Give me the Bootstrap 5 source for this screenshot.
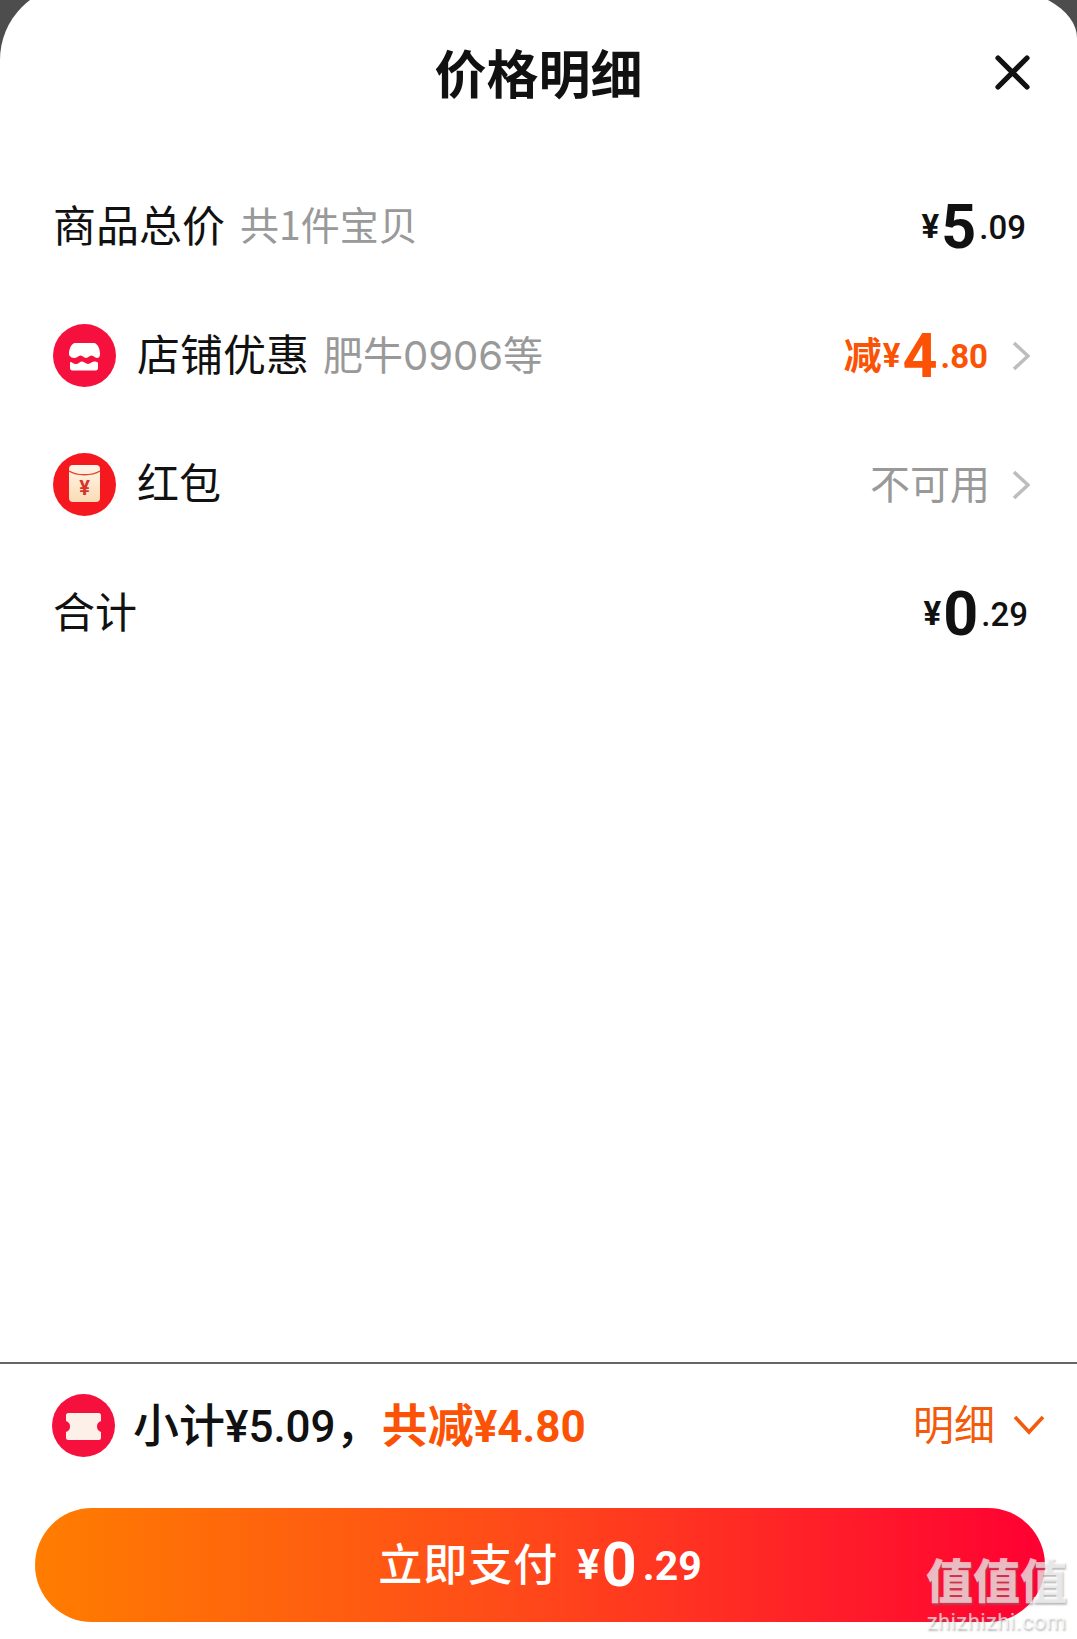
<!DOCTYPE html>
<html lang="zh-CN">
<head>
  <meta charset="UTF-8">
  <meta name="viewport" content="width=device-width, initial-scale=1.0">
  <title>价格明细</title>
  <link href="https://cdn.jsdelivr.net/npm/bootstrap@5.3.0/dist/css/bootstrap.min.css" rel="stylesheet">
  <style>
    html, body {
      height: 1639px;
      overflow: hidden;
    }
    body {
      background-color: #4d4d4d;
      color: #111;
      font-family: Roboto, "Noto Sans CJK SC", sans-serif;
    }
    .sheet {
      position: relative;
      height: 1654px;
      margin-top: -15px;
      background: #fff;
      border-radius: 75px 96px 0 0 / 75px 53px 0 0;
      overflow: hidden;
    }
    .cjk { font-family: "Noto Sans CJK SC", sans-serif; }
    .sheet-head {
      height: 177px;
      padding: 50px 47px 0;
    }
    .sheet-title {
      font-size: 52px;
      line-height: 74px;
      font-weight: 700;
      margin: 0;
    }
    .head-gap { width: 35px; }
    .close-icon { margin-top: 20px; }
    .fee-row {
      height: 129px;
      padding: 0 47px 0 53px;
    }
    .fee-label {
      font-size: 43px;
      line-height: 60px;
      padding-bottom: 8px;
    }
    .fee-label-short { font-size: 42px; }
    .fee-note {
      font-size: 39px;
      line-height: 60px;
      color: #999;
      margin-left: 15px;
      padding-bottom: 8px;
    }
    .fee-note-num { font-size: 40px; margin-left: 14px; padding-bottom: 3px; }
    .note-num { font-family: Inter, sans-serif; }
    .fee-icon {
      width: 63px;
      height: 63px;
      margin-right: 21px;
      flex: none;
    }
    .price {
      display: flex;
      align-items: center;
      line-height: 60px;
      white-space: nowrap;
    }
    .price-end { margin-right: 4px; }
    .price-end-alt { margin-right: 2px; }
    .price-sym { font-size: 33px; font-weight: 700; margin-right: 2px; }
    .price-big { font-size: 61px; font-weight: 700; }
    .price-dec { font-size: 33px; font-weight: 500; margin-left: 3px; padding-top: 2px; }
    .price-cut { color: #fb5205; }
    .price-cut .cut-word { font-size: 38px; font-weight: 700; margin-right: 1px; padding-bottom: 6px; }
    .fee-muted { font-size: 40px; color: #999; line-height: 60px; padding-bottom: 6px; margin-right: -2px; }
    .fee-chevron { width: 18px; height: 30px; margin-left: 24px; }
    .sheet-foot { border-top: 2px solid #666; }
    .total-row {
      height: 122px;
      margin-bottom: 22px;
      padding: 0 32px 0 52px;
    }
    .total-icon { width: 63px; height: 63px; margin-right: 18px; flex: none; }
    .total-text {
      font-size: 44px;
      font-weight: 500;
      line-height: 60px;
      white-space: nowrap;
      padding-bottom: 2px;
    }
    .total-text .cjk { font-size: 46px; }
    .total-cut { color: #fb5205; font-weight: 700; }
    .detail-link {
      color: #f25a0c;
      font-size: 41px;
      line-height: 60px;
      padding-bottom: 6px;
    }
    .detail-chevron { width: 32px; height: 20px; margin-left: 18px; }
    .pay-btn {
      display: flex;
      align-items: center;
      justify-content: center;
      width: 1010px;
      height: 114px;
      margin: 0 0 17px 35px;
      padding: 0;
      border: 0;
      border-radius: 57px;
      color: #fff;
      background: linear-gradient(90deg, #ff7d00 0%, #ff4d18 45%, #ff0033 100%);
    }
    .pay-word { font-size: 44px; font-weight: 500; letter-spacing: 1px; margin-right: 19px; padding-bottom: 6px; }
    .pay-btn .price-sym { font-size: 42px; }
    .pay-btn .price-big { font-size: 61px; }
    .pay-btn .price-dec { font-size: 41px; font-weight: 700; margin-left: 6px; }
    .mark-logo {
      position: absolute;
      right: 10px;
      bottom: 5px;
      text-align: center;
      color: rgba(255, 255, 255, .68);
      text-shadow: 1px 2px 2px rgba(120, 120, 120, .5);
      pointer-events: none;
    }
    .mark-logo-top { font-size: 47px; font-weight: 900; line-height: 48px; }
    .mark-logo-url { font-size: 22px; line-height: 24px; margin-top: 8px; letter-spacing: .4px; }
  </style>
</head>
<body>
  <div class="sheet d-flex flex-column">
    <div class="sheet-head d-flex justify-content-between align-items-start">
      <div class="head-gap"></div>
      <h1 class="sheet-title cjk">价格明细</h1>
      <svg width="35" height="35" viewBox="0 0 35 35" class="close-icon" aria-label="关闭">
        <path d="M3 3L32 32M32 3L3 32" stroke="#111" stroke-width="5.2" stroke-linecap="round"/>
      </svg>
    </div>

    <div class="fee-row d-flex align-items-center justify-content-between">
      <div class="d-flex align-items-center cjk">
        <span class="fee-label">商品总价</span><span class="fee-note">共1件宝贝</span>
      </div>
      <div class="price price-end">
        <span class="price-sym">¥</span><span class="price-big">5</span><span class="price-dec">.09</span>
      </div>
    </div>

    <div class="fee-row d-flex align-items-center justify-content-between">
      <div class="d-flex align-items-center cjk">
        <svg class="fee-icon" viewBox="0 0 63 63">
          <circle cx="31.5" cy="31.5" r="31.5" fill="#f5103d"/>
          <path d="M22 19H41C44 19 47 24 47 30C47 32.5 46 34 44 34C41.5 34 41 31.5 38.5 31.5C36 31.5 35.5 34 33 34C30.5 34 30 31.5 27.5 31.5C25 31.5 24.5 34 22 34C19 34 16 32.5 16 30C16 24 19 19 22 19Z" fill="#fff"/>
          <path d="M17 38C19.5 38 20 40 23 40C26 40 26.5 37.5 29 37.5C31.5 37.5 32.5 40 35 40C37.5 40 38.5 37.5 41 37.5C43 37.5 44 38 45 38.5V44C45 45.5 44 46.5 43 46.5H19C18 46.5 17 45.5 17 44Z" fill="#fff"/>
        </svg>
        <span class="fee-label">店铺优惠</span><span class="fee-note fee-note-num">肥牛<span class="note-num">0906</span>等</span>
      </div>
      <div class="d-flex align-items-center">
        <div class="price price-cut">
          <span class="cut-word cjk">减</span><span class="price-sym">¥</span><span class="price-big">4</span><span class="price-dec fw-bold">.80</span>
        </div>
        <svg class="fee-chevron" viewBox="0 0 18 30"><path d="M2 2L16 15L2 28" fill="none" stroke="#bdbdbd" stroke-width="3.6"/></svg>
      </div>
    </div>

    <div class="fee-row d-flex align-items-center justify-content-between">
      <div class="d-flex align-items-center cjk">
        <svg class="fee-icon" viewBox="0 0 63 63">
          <defs>
            <linearGradient id="envFill" x1="0" y1="0" x2="0" y2="1">
              <stop offset="0" stop-color="#fff6e8"/>
              <stop offset="1" stop-color="#fbdcb4"/>
            </linearGradient>
          </defs>
          <circle cx="31.5" cy="31.5" r="31.5" fill="#f5191f"/>
          <rect x="16" y="12" width="31" height="37" rx="4" fill="url(#envFill)"/>
          <path d="M16 18C24 23 39 23 47 18" fill="none" stroke="#e9402f" stroke-width="1.4"/>
          <text x="31.5" y="42" text-anchor="middle" font-family="Roboto, sans-serif" font-size="20" font-weight="700" fill="#d8342c">¥</text>
        </svg>
        <span class="fee-label fee-label-short">红包</span>
      </div>
      <div class="d-flex align-items-center">
        <span class="fee-muted cjk">不可用</span>
        <svg class="fee-chevron" viewBox="0 0 18 30"><path d="M2 2L16 15L2 28" fill="none" stroke="#bdbdbd" stroke-width="3.6"/></svg>
      </div>
    </div>

    <div class="fee-row d-flex align-items-center justify-content-between">
      <span class="fee-label fee-label-short cjk">合计</span>
      <div class="price price-end-alt">
        <span class="price-sym">¥</span><span class="price-big">0</span><span class="price-dec">.29</span>
      </div>
    </div>

    <div class="flex-grow-1"></div>

    <div class="sheet-foot">
      <div class="total-row d-flex align-items-center justify-content-between">
        <div class="d-flex align-items-center">
          <svg class="total-icon" viewBox="0 0 63 63">
            <circle cx="31.5" cy="31.5" r="31.5" fill="#f5103d"/>
            <path d="M16 19H47C48 19 49 20 49 21V27C46 28 45 30 45 32.5C45 35 46 37 49 38V44C49 45 48 46 47 46H16C15 46 14 45 14 44V38C17 37 18 35 18 32.5C18 30 17 28 14 27V21C14 20 15 19 16 19Z" fill="#fdf0e8"/>
          </svg>
          <div class="total-text">
            <span class="cjk">小计</span>¥5.09<span class="cjk">，</span><span class="total-cut"><span class="cjk">共减</span>¥4.80</span>
          </div>
        </div>
        <div class="d-flex align-items-center">
          <span class="detail-link cjk">明细</span>
          <svg class="detail-chevron" viewBox="0 0 32 20"><path d="M2 2L16 17L30 2" fill="none" stroke="#f25a0c" stroke-width="3.6"/></svg>
        </div>
      </div>
      <button type="button" class="pay-btn">
        <span class="pay-word cjk">立即支付</span>
        <span class="price">
          <span class="price-sym">¥</span><span class="price-big">0</span><span class="price-dec">.29</span>
        </span>
      </button>
    </div>

    <div class="mark-logo">
      <div class="mark-logo-top cjk">值值值</div>
      <div class="mark-logo-url">zhizhizhi.com</div>
    </div>
  </div>
  <script src="https://cdn.jsdelivr.net/npm/bootstrap@5.3.0/dist/js/bootstrap.bundle.min.js"></script>
</body>
</html>
